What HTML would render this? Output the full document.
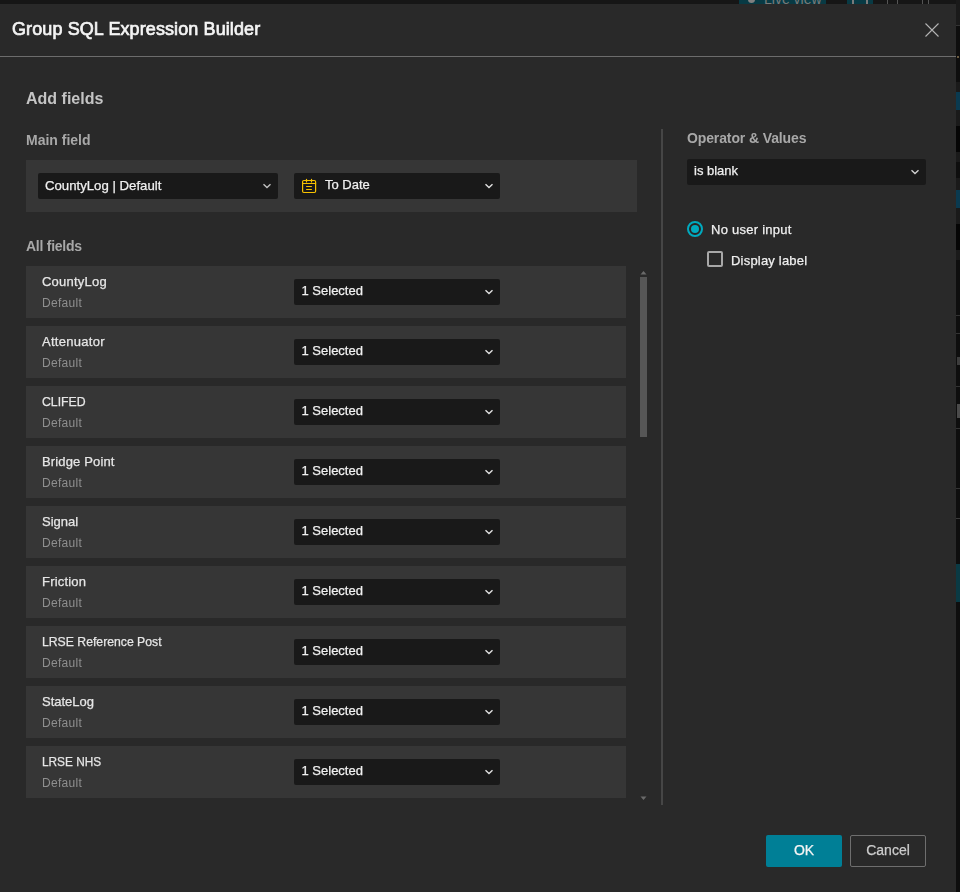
<!DOCTYPE html>
<html><head><meta charset="utf-8">
<style>
*{box-sizing:border-box;margin:0;padding:0}
html,body{width:960px;height:892px;overflow:hidden;background:#161616;font-family:"Liberation Sans",sans-serif;color:#f0f0f0}
.abs{position:absolute}
#dlg{position:absolute;left:0;top:4px;width:956px;height:888px;background:#292929}
#c{position:absolute;left:0;top:0;width:960px;height:892px;will-change:transform}
#c div{position:absolute;white-space:nowrap}
.tx{-webkit-text-stroke:0.25px currentColor}
.title{left:12px;top:19px;font-size:18px;line-height:20px;color:#f4f4f4;letter-spacing:0.1px;-webkit-text-stroke:0.7px #f4f4f4 !important}
.lbl{font-weight:bold;font-size:14px;line-height:16px;color:#a8a8a8}
.panel{background:#363636}
.sel{background:#191919;border-radius:2px;height:26px}
.st{font-size:13px;line-height:16px;color:#f0f0f0}
.item{left:26px;width:600px;height:52px;background:#363636}
.n{left:42px;font-size:13px;line-height:16px;color:#e6e6e6}
.d{left:42px;font-size:12px;line-height:14px;color:#8f8f8f;letter-spacing:0.3px}
</style></head><body>
<div id="bg" style="position:absolute;left:0;top:0;width:960px;height:892px">
<div class="abs" style="left:739px;top:0;width:87px;height:4px;background:#083a44"></div>
<div class="abs" style="left:748px;top:-4px;width:7px;height:7px;border-radius:50%;background:#808080"></div>
<div class="abs" style="left:764px;top:-8.5px;font-size:14px;line-height:14px;color:#7a7a7a;white-space:nowrap">Live view</div>
<div class="abs" style="left:847px;top:0;width:26px;height:4px;background:#083a44"></div>
<div class="abs" style="left:852px;top:0;width:2px;height:4px;background:#7a7a7a"></div>
<div class="abs" style="left:866px;top:0;width:2px;height:4px;background:#7a7a7a"></div>
<div class="abs" style="left:887px;top:0;width:1px;height:4px;background:#555"></div>
<div class="abs" style="left:897px;top:0;width:1px;height:4px;background:#555"></div>
<div class="abs" style="left:922px;top:0;width:1px;height:4px;background:#555"></div>
<div class="abs" style="left:928px;top:0;width:1px;height:4px;background:#555"></div>
<div class="abs" style="left:956px;top:0;width:4px;height:892px;background:#0e0e0e"></div>
<div class="abs" style="left:956px;top:0;width:4px;height:25px;background:#1a1a1a"></div>
<div class="abs" style="left:956px;top:25px;width:4px;height:1px;background:#333"></div>
<div class="abs" style="left:956px;top:82px;width:4px;height:10px;background:#1a1a1a"></div>
<div class="abs" style="left:956px;top:92px;width:4px;height:18px;background:#0a3a50"></div>
<div class="abs" style="left:956px;top:110px;width:4px;height:16px;background:#1a1a1a"></div>
<div class="abs" style="left:956px;top:126px;width:4px;height:26px;background:#050505"></div>
<div class="abs" style="left:956px;top:152px;width:4px;height:10px;background:#1a1a1a"></div>
<div class="abs" style="left:956px;top:178px;width:4px;height:12px;background:#1a1a1a"></div>
<div class="abs" style="left:956px;top:190px;width:4px;height:18px;background:#0a3a50"></div>
<div class="abs" style="left:956px;top:208px;width:4px;height:16px;background:#1a1a1a"></div>
<div class="abs" style="left:956px;top:224px;width:4px;height:26px;background:#050505"></div>
<div class="abs" style="left:956px;top:250px;width:4px;height:10px;background:#1a1a1a"></div>
<div class="abs" style="left:956px;top:564px;width:4px;height:38px;background:#0a3a44"></div>
<div class="abs" style="left:956px;top:315px;width:4px;height:1px;background:#333"></div>
<div class="abs" style="left:956px;top:333px;width:4px;height:1px;background:#333"></div>
<div class="abs" style="left:957px;top:357px;width:3px;height:8px;background:#3c3c3c"></div>
<div class="abs" style="left:956px;top:386px;width:4px;height:1px;background:#333"></div>
<div class="abs" style="left:957px;top:404px;width:3px;height:14px;background:#4a4a4a"></div>
<div class="abs" style="left:956px;top:428px;width:4px;height:1px;background:#333"></div>
<div class="abs" style="left:956px;top:488px;width:4px;height:1px;background:#333"></div>
<div class="abs" style="left:956px;top:518px;width:4px;height:1px;background:#3a3a3a"></div>
<div class="abs" style="left:957px;top:56px;width:2px;height:2px;background:#6a5a40"></div>
</div>
<div id="dlg"></div>
<div id="c">
  <div class="title tx">Group SQL Expression Builder</div>
  <svg class="abs" style="left:925px;top:23px" width="14" height="14" viewBox="0 0 14 14"><path d="M0.5 0.5L13.5 13.5M13.5 0.5L0.5 13.5" stroke="#b4b4b4" stroke-width="1.1" fill="none"/></svg>
  <div style="left:0;top:56px;width:956px;height:1px;background:#6c6c6c"></div>

  <div style="left:26px;top:90px;font-size:16px;line-height:18px;font-weight:bold;color:#c4c4c4">Add fields</div>
  <div class="lbl" style="left:26px;top:132px">Main field</div>

  <div class="panel" style="left:26px;top:160px;width:611px;height:52px"></div>
  <div class="sel" style="left:38px;top:173px;width:240px"></div>
  <div class="st tx" style="left:45px;top:178px;font-size:13.2px">CountyLog | Default</div>
  <svg class="abs" style="left:263px;top:183px" width="9" height="6" viewBox="0 0 9 6"><path d="M0.5 1.3L4 4.6L7.5 1.3" stroke="#c0c0c0" stroke-width="1.4" fill="none"/></svg>
  <div class="sel" style="left:294px;top:173px;width:206px"></div>
  <svg class="abs" style="left:302px;top:178px" width="15" height="16" viewBox="0 0 15 16"><g fill="none" stroke="#f7c200" stroke-width="1.2" stroke-linecap="round"><rect x="0.6" y="2.5" width="13" height="12" rx="1.2"/><path d="M0.6 5.5H13.6M4.5 1.3V4M9.5 1.3V4M4.6 8.5H9.4M4.6 11.5H9.4"/></g></svg>
  <div class="st tx" style="left:325px;top:176.5px">To Date</div>
  <svg class="abs" style="left:485px;top:183px" width="9" height="6" viewBox="0 0 9 6"><path d="M0.5 1.3L4 4.6L7.5 1.3" stroke="#e0e0e0" stroke-width="1.4" fill="none"/></svg>

  <div class="lbl" style="left:26px;top:238px;letter-spacing:-0.25px">All fields</div>

  <div style="left:0;top:262px;width:640px;height:536px;overflow:hidden;top:0;height:798px">
<div class="item" style="top:266px"></div>
<div class="n tx" style="top:274px;letter-spacing:0.22px">CountyLog</div><div class="d" style="top:296px">Default</div>
<div class="sel" style="left:294px;top:279px;width:206px"></div><div class="st tx" style="left:301.5px;top:282.5px">1 Selected</div>
<svg class="abs" style="left:485px;top:289px" width="9" height="6" viewBox="0 0 9 6"><path d="M0.5 1.3L4 4.6L7.5 1.3" stroke="#e0e0e0" stroke-width="1.4" fill="none"/></svg>
<div class="item" style="top:326px"></div>
<div class="n tx" style="top:334px;letter-spacing:0.28px">Attenuator</div><div class="d" style="top:356px">Default</div>
<div class="sel" style="left:294px;top:339px;width:206px"></div><div class="st tx" style="left:301.5px;top:342.5px">1 Selected</div>
<svg class="abs" style="left:485px;top:349px" width="9" height="6" viewBox="0 0 9 6"><path d="M0.5 1.3L4 4.6L7.5 1.3" stroke="#e0e0e0" stroke-width="1.4" fill="none"/></svg>
<div class="item" style="top:386px"></div>
<div class="n tx" style="top:394px;transform:scaleX(0.945);transform-origin:0 0">CLIFED</div><div class="d" style="top:416px">Default</div>
<div class="sel" style="left:294px;top:399px;width:206px"></div><div class="st tx" style="left:301.5px;top:402.5px">1 Selected</div>
<svg class="abs" style="left:485px;top:409px" width="9" height="6" viewBox="0 0 9 6"><path d="M0.5 1.3L4 4.6L7.5 1.3" stroke="#e0e0e0" stroke-width="1.4" fill="none"/></svg>
<div class="item" style="top:446px"></div>
<div class="n tx" style="top:454px;letter-spacing:0.15px">Bridge Point</div><div class="d" style="top:476px">Default</div>
<div class="sel" style="left:294px;top:459px;width:206px"></div><div class="st tx" style="left:301.5px;top:462.5px">1 Selected</div>
<svg class="abs" style="left:485px;top:469px" width="9" height="6" viewBox="0 0 9 6"><path d="M0.5 1.3L4 4.6L7.5 1.3" stroke="#e0e0e0" stroke-width="1.4" fill="none"/></svg>
<div class="item" style="top:506px"></div>
<div class="n tx" style="top:514px">Signal</div><div class="d" style="top:536px">Default</div>
<div class="sel" style="left:294px;top:519px;width:206px"></div><div class="st tx" style="left:301.5px;top:522.5px">1 Selected</div>
<svg class="abs" style="left:485px;top:529px" width="9" height="6" viewBox="0 0 9 6"><path d="M0.5 1.3L4 4.6L7.5 1.3" stroke="#e0e0e0" stroke-width="1.4" fill="none"/></svg>
<div class="item" style="top:566px"></div>
<div class="n tx" style="top:574px;letter-spacing:0.2px">Friction</div><div class="d" style="top:596px">Default</div>
<div class="sel" style="left:294px;top:579px;width:206px"></div><div class="st tx" style="left:301.5px;top:582.5px">1 Selected</div>
<svg class="abs" style="left:485px;top:589px" width="9" height="6" viewBox="0 0 9 6"><path d="M0.5 1.3L4 4.6L7.5 1.3" stroke="#e0e0e0" stroke-width="1.4" fill="none"/></svg>
<div class="item" style="top:626px"></div>
<div class="n tx" style="top:634px;transform:scaleX(0.94);transform-origin:0 0">LRSE Reference Post</div><div class="d" style="top:656px">Default</div>
<div class="sel" style="left:294px;top:639px;width:206px"></div><div class="st tx" style="left:301.5px;top:642.5px">1 Selected</div>
<svg class="abs" style="left:485px;top:649px" width="9" height="6" viewBox="0 0 9 6"><path d="M0.5 1.3L4 4.6L7.5 1.3" stroke="#e0e0e0" stroke-width="1.4" fill="none"/></svg>
<div class="item" style="top:686px"></div>
<div class="n tx" style="top:694px">StateLog</div><div class="d" style="top:716px">Default</div>
<div class="sel" style="left:294px;top:699px;width:206px"></div><div class="st tx" style="left:301.5px;top:702.5px">1 Selected</div>
<svg class="abs" style="left:485px;top:709px" width="9" height="6" viewBox="0 0 9 6"><path d="M0.5 1.3L4 4.6L7.5 1.3" stroke="#e0e0e0" stroke-width="1.4" fill="none"/></svg>
<div class="item" style="top:746px"></div>
<div class="n tx" style="top:754px;transform:scaleX(0.91);transform-origin:0 0">LRSE NHS</div><div class="d" style="top:776px">Default</div>
<div class="sel" style="left:294px;top:759px;width:206px"></div><div class="st tx" style="left:301.5px;top:762.5px">1 Selected</div>
<svg class="abs" style="left:485px;top:769px" width="9" height="6" viewBox="0 0 9 6"><path d="M0.5 1.3L4 4.6L7.5 1.3" stroke="#e0e0e0" stroke-width="1.4" fill="none"/></svg>
  </div>

  <svg class="abs" style="left:640px;top:270px" width="7" height="5" viewBox="0 0 7 5"><path d="M0.5 4.5L3.5 1L6.5 4.5Z" fill="#6a6a6a"/></svg>
  <div style="left:640px;top:277px;width:7px;height:160px;background:#565656"></div>
  <svg class="abs" style="left:640px;top:796px" width="7" height="5" viewBox="0 0 7 5"><path d="M0.5 0.5L3.5 4L6.5 0.5Z" fill="#6a6a6a"/></svg>

  <div style="left:661px;top:129px;width:2px;height:676px;background:#464646"></div>

  <div class="lbl" style="left:687px;top:130px;letter-spacing:-0.12px">Operator &amp; Values</div>
  <div class="sel" style="left:687px;top:159px;width:239px"></div>
  <div class="st tx" style="left:694px;top:163.2px">is blank</div>
  <svg class="abs" style="left:911px;top:169px" width="9" height="6" viewBox="0 0 9 6"><path d="M0.5 1.3L4 4.6L7.5 1.3" stroke="#d0d0d0" stroke-width="1.4" fill="none"/></svg>

  <svg class="abs" style="left:687px;top:221px" width="16" height="16" viewBox="0 0 16 16"><circle cx="8" cy="8" r="7" fill="#2a2424" stroke="#00aabf" stroke-width="2"/><circle cx="8" cy="8" r="4" fill="#00aabf"/></svg>
  <div class="st tx" style="left:711px;top:222px;letter-spacing:0.25px">No user input</div>
  <div style="left:707px;top:251px;width:16px;height:16px;border:2px solid #a8a8a8;border-radius:2px"></div>
  <div class="st tx" style="left:731px;top:253px;letter-spacing:0.2px">Display label</div>

  <div style="left:766px;top:835px;width:76px;height:32px;background:#007f96;border-radius:2px;font-size:14px;line-height:30px;text-align:center;color:#f4f4f4" class="tx">OK</div>
  <div style="left:850px;top:835px;width:76px;height:32px;border:1px solid #6e6e6e;border-radius:2px;font-size:14px;line-height:28px;text-align:center;color:#cccccc" class="tx">Cancel</div>
</div>
</body></html>
